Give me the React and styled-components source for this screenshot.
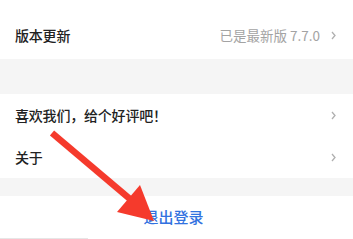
import React from "react";
import styled, { createGlobalStyle } from "styled-components";

const Global = createGlobalStyle`
  html, body { margin: 0; padding: 0; background: #ffffff; }
  body { font-family: "Noto Sans CJK SC", "Noto Sans", sans-serif; }
  #root { width: 353px; height: 239px; overflow: hidden; }
`;

const Page = styled.div`
  position: relative;
  width: 353px;
  height: 239px;
  display: flex;
  flex-direction: column;
  background: #ffffff;
`;

const Section = styled.div`
  background: #ffffff;
  display: flex;
  flex-direction: column;
  padding-top: ${(p) => p.$top || 0}px;
  padding-bottom: ${(p) => p.$bottom || 0}px;
`;

const Gap = styled.div`
  height: ${(p) => p.$h}px;
  background: #f5f5f5;
  flex-shrink: 0;
`;

const Row = styled.div`
  height: 42px;
  display: flex;
  align-items: center;
  padding: 0 17px 0 15px;
  box-sizing: border-box;
`;

const Title = styled.span`
  flex: 1;
  font-size: 14px;
  font-weight: 500;
  color: #222222;
  letter-spacing: -0.2px;
`;

const Value = styled.span`
  font-size: 13.5px;
  color: #a3a3a3;
  margin-right: 11px;
`;

const Chevron = styled.svg`
  width: 5px;
  height: 9px;
  flex-shrink: 0;
`;

const Logout = styled.div`
  height: 40px;
  display: flex;
  align-items: center;
  justify-content: center;
  font-size: 15px;
  font-weight: 500;
  color: #3272e0;
  padding-right: 6px;
`;

const BottomLine = styled.div`
  margin-top: 2px;
  width: 88px;
  height: 1px;
  background: #e6e6e6;
`;

const Arrow = styled.svg`
  position: absolute;
  left: 0;
  top: 0;
  width: 353px;
  height: 239px;
  pointer-events: none;
`;

const Chev = () => (
  <Chevron viewBox="0 0 5 9">
    <path d="M1 1 L4 4.5 L1 8" fill="none" stroke="#b0b0b0" strokeWidth="1.3" />
  </Chevron>
);

export default function App() {
  return (
    <Page>
      <Global />
      <Section $top={14} $bottom={3}>
        <Row>
          <Title>版本更新</Title>
          <Value>已是最新版 7.7.0</Value>
          <Chev />
        </Row>
      </Section>
      <Gap $h={35} />
      <Section>
        <Row>
          <Title>喜欢我们，给个好评吧！</Title>
          <Chev />
        </Row>
        <Row>
          <Title>关于</Title>
          <Chev />
        </Row>
      </Section>
      <Gap $h={18} />
      <Section>
        <Logout>退出登录</Logout>
        <BottomLine />
      </Section>
      <Arrow viewBox="0 0 353 239">
        <line x1="52" y1="133" x2="130" y2="199" stroke="#f53a2c" strokeWidth="6.5" strokeLinecap="butt" />
        <polygon points="140,185 117,212 154,221" fill="#f53a2c" />
      </Arrow>
    </Page>
  );
}
